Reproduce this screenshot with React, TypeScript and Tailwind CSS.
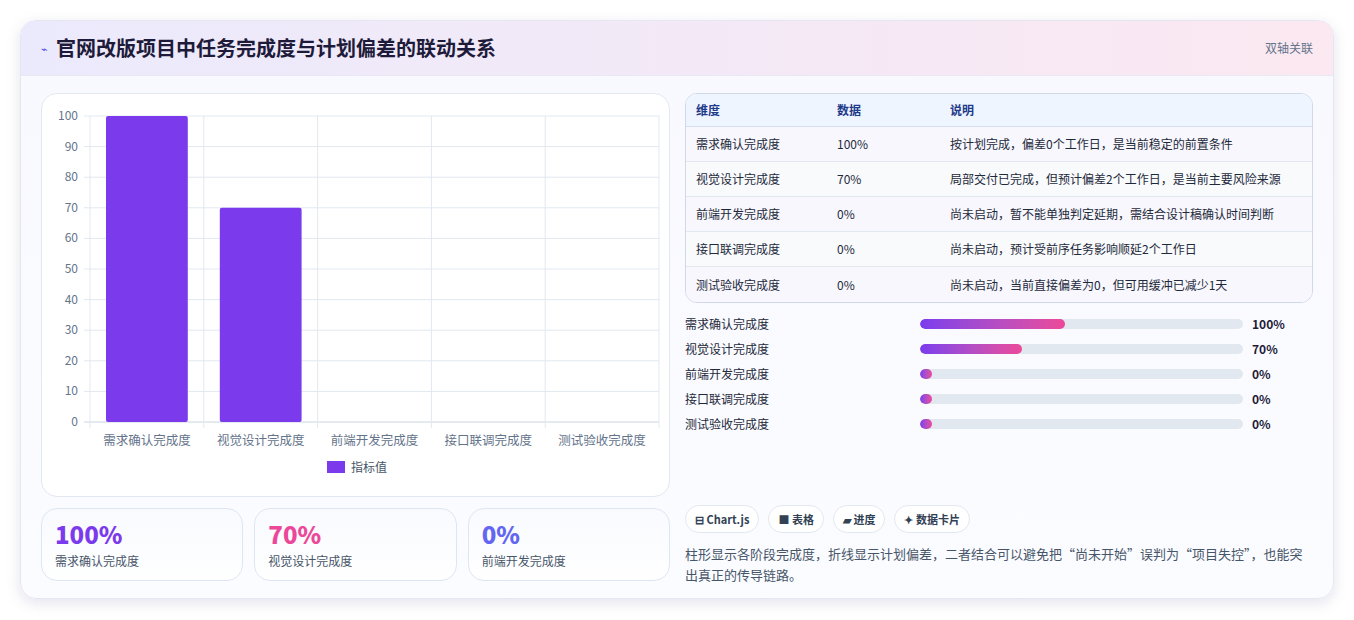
import React from "react";

const F = { fontFamily: '"Noto Sans CJK SC", "Noto Sans", sans-serif' };
const cats = ["需求确认完成度", "视觉设计完成度", "前端开发完成度", "接口联调完成度", "测试验收完成度"];
const vals = [100, 70, 0, 0, 0];
const notes = [
  "按计划完成，偏差0个工作日，是当前稳定的前置条件",
  "局部交付已完成，但预计偏差2个工作日，是当前主要风险来源",
  "尚未启动，暂不能单独判定延期，需结合设计稿确认时间判断",
  "尚未启动，预计受前序任务影响顺延2个工作日",
  "尚未启动，当前直接偏差为0，但可用缓冲已减少1天",
];

function Chart() {
  const x0 = 48, x1 = 617, yTop = 22, yBot = 328;
  const cw = (x1 - x0) / 5;
  const ys = [100, 90, 80, 70, 60, 50, 40, 30, 20, 10, 0];
  return (
    <svg width="629" height="403" style={F}>
      {ys.map((v) => {
        const y = yBot - ((yBot - yTop) * v) / 100;
        return (
          <g key={v}>
            <line x1={x0 - 6} x2={x1} y1={y} y2={y} stroke={v === 0 ? "#cbd5e1" : "#e2e8f0"} />
            <text x={x0 - 12} y={y + 4} fontSize="12" fill="#64748b" textAnchor="end">{v}</text>
          </g>
        );
      })}
      {[0, 1, 2, 3, 4, 5].map((i) => (
        <line key={i} x1={x0 + i * cw} x2={x0 + i * cw} y1={yTop} y2={yBot + 6} stroke="#e2e8f0" />
      ))}
      {vals.map((v, i) => {
        const h = ((yBot - yTop) * v) / 100;
        return v > 0 ? (
          <rect key={i} x={x0 + i * cw + 16} y={yBot - h} width={cw - 32} height={h} fill="#7c3aed" rx="2" />
        ) : null;
      })}
      {cats.map((c, i) => (
        <text key={c} x={x0 + i * cw + cw / 2} y={yBot + 23} fontSize="12.5" fill="#64748b" textAnchor="middle">{c}</text>
      ))}
      <rect x="285" y="367" width="18" height="12" fill="#7c3aed" />
      <text x="309" y="378" fontSize="12" fill="#475569">指标值</text>
    </svg>
  );
}

export default function App() {
  return (
    <div className="w-[1354px] h-[620px] bg-white pt-5 px-5" style={F}>
      <div className="w-[1314px] h-[579px] rounded-2xl bg-gradient-to-b from-[#f8f8ff] to-[#fbfcff] shadow-[0_4px_14px_rgba(100,100,160,0.18)] border border-[#e6e6f2] overflow-hidden">
        <div className="h-[55px] flex items-center justify-between px-5 bg-gradient-to-r from-[#ebeafc] to-[#fbe8f1] border-b border-[#ebe8f5]">
          <div className="flex items-center gap-2">
            <span className="text-[11px] text-[#4f46e5]">⌁</span>
            <span className="text-[20px] font-bold text-[#1e1b3a]">官网改版项目中任务完成度与计划偏差的联动关系</span>
          </div>
          <span className="text-[12px] text-[#64748b]">双轴关联</span>
        </div>
        <div className="flex gap-[15px] px-5 pt-[17px]">
          <div className="w-[629px] flex flex-col gap-[11px]">
            <div className="h-[404px] rounded-2xl bg-white border border-[#e2e8f0]"><Chart /></div>
            <div className="grid grid-cols-3 gap-[11px]">
              {[["100%", "text-[#7c3aed]", "需求确认完成度"], ["70%", "text-[#ec4899]", "视觉设计完成度"], ["0%", "text-[#6366f1]", "前端开发完成度"]].map(([v, c, l]) => (
                <div key={l} className="h-[73px] rounded-2xl border border-[#dde6f3] bg-gradient-to-b from-[#f8fafe] to-white px-[13px] pt-[10px]">
                  <div className={`text-[24px] font-extrabold leading-[30px] ${c}`}>{v}</div>
                  <div className="text-[12px] text-[#475569] mt-[3px]">{l}</div>
                </div>
              ))}
            </div>
          </div>
          <div className="w-[631px] flex flex-col">
            <div className="rounded-xl border border-[#cfd9e8] overflow-hidden bg-white text-[12px]">
              <div className="flex h-[33px] items-center bg-[#eff5ff] text-[#1e3a8a] font-bold border-b border-[#d5deec]">
                <div className="w-[151px] pl-[10px]">维度</div>
                <div className="w-[113px]">数据</div>
                <div>说明</div>
              </div>
              {cats.map((c, i) => (
                <div key={c} className={`flex h-[35px] items-center text-[#1e293b] ${i % 2 ? "bg-[#f8fafc]" : "bg-[#f7f7fd]"} ${i < 4 ? "border-b border-[#e2e8f0]" : ""}`}>
                  <div className="w-[151px] pl-[10px]">{c}</div>
                  <div className="w-[113px]">{vals[i]}%</div>
                  <div>{notes[i]}</div>
                </div>
              ))}
            </div>
            <div className="mt-[12px] flex flex-col gap-[8px] text-[12px] text-[#1e293b]">
              {cats.map((c, i) => (
                <div key={c} className="flex items-center h-[17px]">
                  <div className="w-[235px]">{c}</div>
                  <div className="w-[323px] h-[10px] rounded-full bg-[#e2e8f0] overflow-hidden">
                    <div className="h-full rounded-full bg-gradient-to-r from-[#7c3aed] to-[#ec4899]" style={{ width: vals[i] ? `${vals[i] * 0.45}%` : "12px" }} />
                  </div>
                  <div className="ml-[9px] font-bold text-[#1e1b3a]">{vals[i]}%</div>
                </div>
              ))}
            </div>
            <div className="mt-[73px] flex gap-[9px] text-[11px] font-bold text-[#334155]">
              {["⊟ Chart.js", "■ 表格", "▰ 进度", "✦ 数据卡片"].map((t) => (
                <span key={t} className="h-[28px] px-[9px] flex items-center rounded-full border border-[#e2e8f0] bg-white">{t}</span>
              ))}
            </div>
            <p className="mt-[10px] text-[13px] leading-[21px] text-[#475569]">
              柱形显示各阶段完成度，折线显示计划偏差，二者结合可以避免把“尚未开始”误判为“项目失控”，也能突出真正的传导链路。
            </p>
          </div>
        </div>
      </div>
    </div>
  );
}
